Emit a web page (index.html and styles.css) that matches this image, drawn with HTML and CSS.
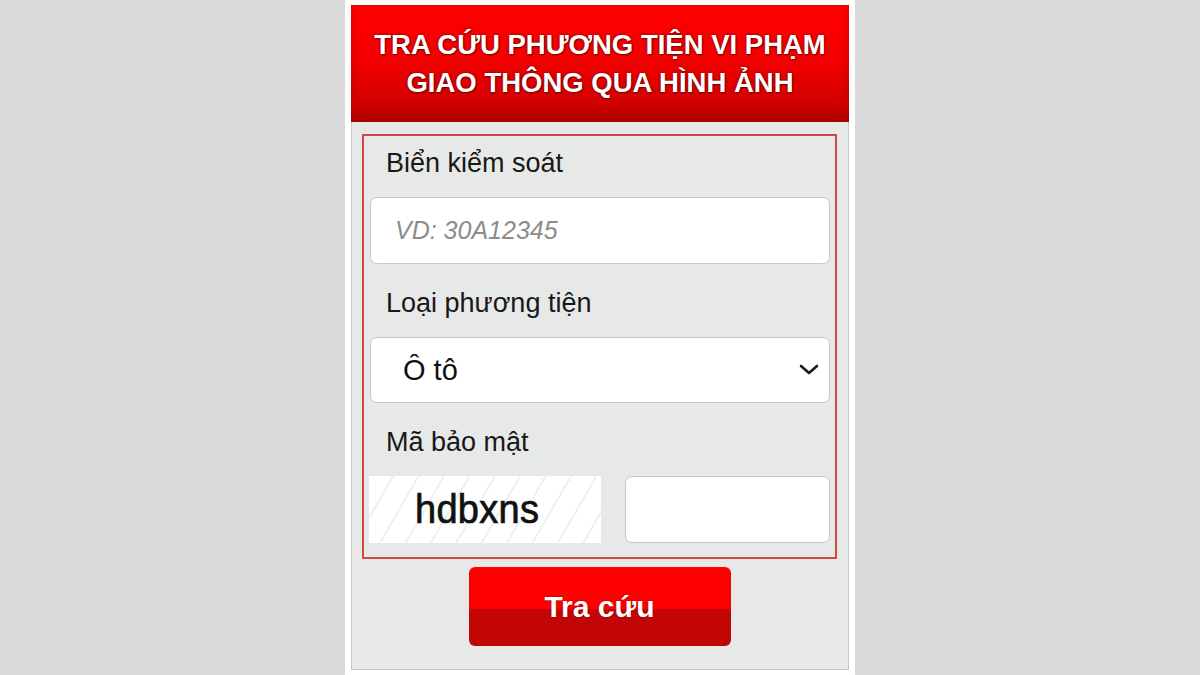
FILE: index.html
```html
<!DOCTYPE html>
<html lang="vi">
<head>
<meta charset="utf-8">
<title>Tra cứu phương tiện vi phạm giao thông qua hình ảnh</title>
<link rel="stylesheet" href="styles.css">
</head>
<body>
<div class="card">
  <div class="header">
    <h1 class="title">TRA CỨU PHƯƠNG TIỆN VI PHẠM<br>GIAO THÔNG QUA HÌNH ẢNH</h1>
  </div>
  <div class="panel">
    <form class="form-box">
      <label class="label label-first">Biển kiểm soát</label>
      <input class="field text-field" type="text" placeholder="VD: 30A12345">
      <label class="label">Loại phương tiện</label>
      <div class="select-wrap">
        <select class="field select-field">
          <option>Ô tô</option>
          <option>Xe máy</option>
        </select>
        <svg class="chevron" width="20" height="11" viewBox="0 0 20 11" aria-hidden="true">
          <path d="M2 2 L10 9 L18 2" fill="none" stroke="#1a1a1a" stroke-width="2.6" stroke-linecap="round" stroke-linejoin="round"/>
        </svg>
      </div>
      <label class="label">Mã bảo mật</label>
      <div class="captcha-row">
        <div class="captcha"><span class="captcha-text">hdbxns</span></div>
        <input class="field captcha-field" type="text">
      </div>
    </form>
    <div class="actions">
      <button class="btn" type="button">Tra cứu</button>
    </div>
  </div>
</div>
</body>
</html>
```
FILE: styles.css
```css
html, body {
  margin: 0;
  height: 100%;
}
body {
  background: #d9d9d9;
  font-family: "Liberation Sans", Arial, sans-serif;
  display: flex;
  justify-content: center;
}
.card {
  width: 498px;
  height: 665px;
  padding: 5px 6px;
  background: #ffffff;
}
.header {
  height: 117px;
  box-sizing: border-box;
  padding-top: 21px;
  background: linear-gradient(to bottom, #ff0000 0%, #f40000 45%, #d80000 78%, #b80000 100%);
  box-shadow: inset 0 -6px 10px rgba(110, 0, 0, 0.25);
}
.title {
  margin: 0;
  font-size: 27.5px;
  line-height: 38px;
  font-weight: bold;
  color: #ffffff;
  text-align: center;
  text-shadow: 0 0 3px rgba(90, 0, 0, 0.85), 1px 1px 1px rgba(60, 0, 0, 0.5);
}
.panel {
  height: 548px;
  box-sizing: border-box;
  border: 1px solid #c6c6c6;
  border-top: none;
  background: #e7e9e8;
  padding: 12px 11px 0 10px;
}
.form-box {
  margin: 0;
  border: 2px solid #cf4a40;
  padding: 0 5px 14px 6px;
}
.label {
  display: block;
  margin: 24px 0 19px;
  padding-left: 16px;
  font-size: 27px;
  line-height: 30px;
  color: #181818;
}
.label-first {
  margin-top: 12px;
}
.field {
  display: block;
  box-sizing: border-box;
  width: 100%;
  height: 67px;
  margin: 0;
  border: 1px solid #c8c8c8;
  border-radius: 7px;
  background: #ffffff;
  font-family: "Liberation Sans", Arial, sans-serif;
  outline: none;
}
.text-field {
  padding: 0 0 0 24px;
  font-size: 25px;
  color: #222;
}
.text-field::placeholder {
  color: #8c8c8c;
  font-style: italic;
}
.select-wrap {
  position: relative;
}
.select-field {
  height: 66px;
  padding: 0 0 0 32px;
  font-size: 29px;
  color: #111;
  -webkit-appearance: none;
  appearance: none;
}
.chevron {
  position: absolute;
  right: 11px;
  top: 27px;
  pointer-events: none;
}
.captcha-row {
  display: flex;
  justify-content: space-between;
  align-items: stretch;
  height: 67px;
}
.captcha {
  width: 232px;
  margin-left: -1px;
  box-sizing: border-box;
  padding-left: 46px;
  background: repeating-linear-gradient(120deg, #ffffff 0 20px, #f0f0f0 20px 22px);
  line-height: 67px;
}
.captcha-text {
  display: inline-block;
  font-family: "Liberation Sans", Arial, sans-serif;
  font-size: 38px;
  color: #111;
  letter-spacing: 0.3px;
  -webkit-text-stroke: 0.7px #111;
  transform: scaleY(1.06);
}
.captcha-field {
  width: 205px;
  height: 67px;
}
.actions {
  padding-top: 8px;
}
.btn {
  display: block;
  margin: 0 auto;
  width: 262px;
  height: 79px;
  border: none;
  border-radius: 6px;
  background: linear-gradient(to bottom, #ff0000 0, #ff0000 53%, #c40606 53%, #c00404 100%);
  color: #ffffff;
  font-family: "Liberation Sans", Arial, sans-serif;
  font-size: 30px;
  font-weight: bold;
  text-shadow: 0 0 2px rgba(80, 0, 0, 0.7);
  cursor: pointer;
}
```
